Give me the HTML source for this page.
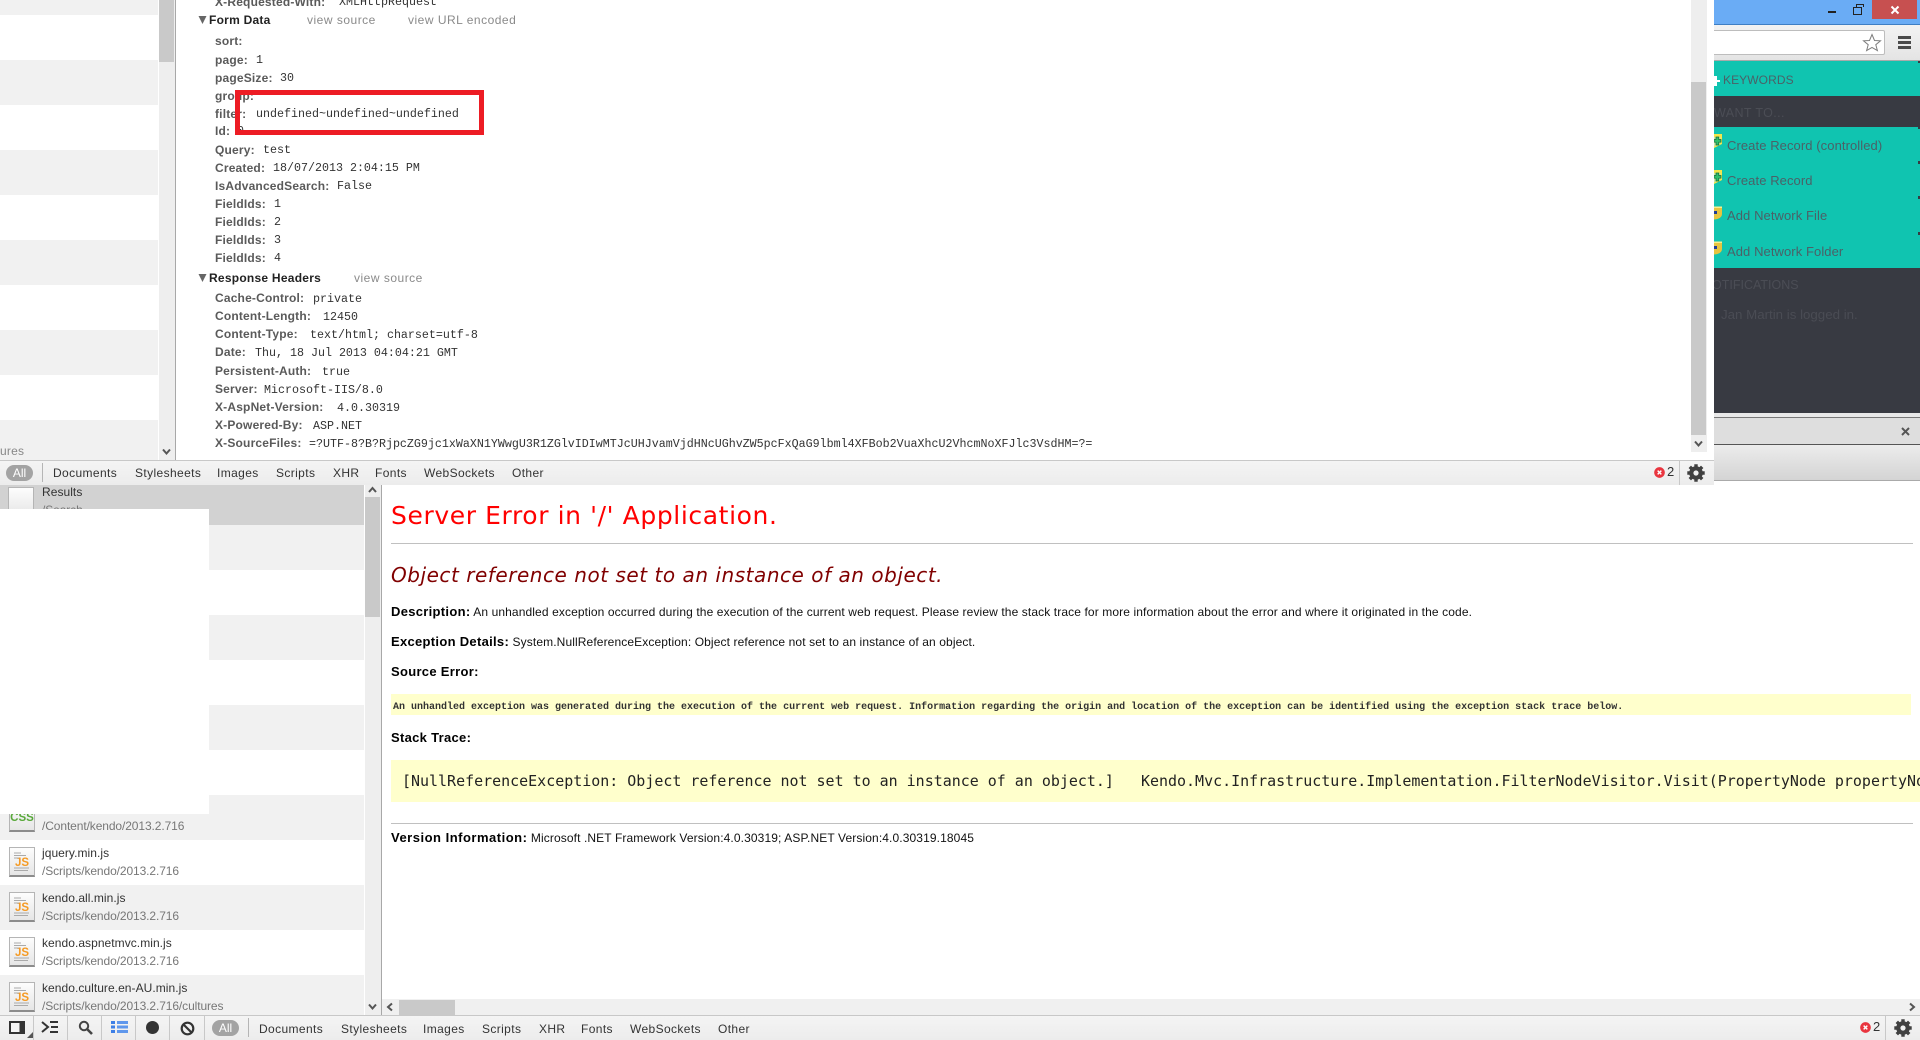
<!DOCTYPE html>
<html><head><meta charset="utf-8"><title>Server Error</title>
<style>
html,body{margin:0;padding:0;background:#fff;width:1920px;height:1040px;overflow:hidden}
body{position:relative;font-family:"Liberation Sans",sans-serif}
div.b{position:absolute}
.t{position:absolute;white-space:pre;line-height:16px;font-size:12px}
.l{font-weight:bold;color:#5a5a5a;left:215px;letter-spacing:.18px}
.v{font-family:"Liberation Mono",monospace;font-size:11.67px;color:#333}
.h{font-weight:bold;color:#222;left:209px;letter-spacing:.25px}
.g{color:#8a8a8a;letter-spacing:.5px}
.n{color:#333;left:42px;letter-spacing:.05px}
.p{color:#777;left:42px;letter-spacing:-.1px}
.tb{color:#333;letter-spacing:.38px;font-size:12px}
.pill{position:absolute;width:27px;height:16px;border-radius:8px;background:#a3a3a3;color:#fff;font-size:12px;line-height:16px;text-align:center;font-weight:normal}
.s{color:#4b6167;font-size:13px;letter-spacing:.08px;position:absolute;white-space:pre;line-height:18px}
.d{color:#4b4d55;font-size:12.5px;letter-spacing:.1px;position:absolute;white-space:pre;line-height:18px}
.e{font-size:12px;letter-spacing:.11px;color:#111;position:absolute;left:391px;white-space:pre;line-height:14px}
.e b{color:#000;font-size:13px;letter-spacing:.3px}
.i{position:absolute;width:24px;height:27px;border:1px solid #b5b5b5;border-bottom:2px solid #8c8c8c;background:linear-gradient(#fdfdfd,#e6e6e6);text-align:center;font-weight:bold;font-size:11.5px;line-height:31px;overflow:hidden}
.js{color:#f59a23}
.css{color:#58a83a}
.i svg{position:absolute;left:3px;top:3px}
</style></head>
<body>
<svg width="0" height="0" style="position:absolute"><defs>
<symbol id="gear" viewBox="0 0 18 18"><circle cx="9" cy="9" r="4.7" fill="none" stroke="#404040" stroke-width="4.2"/><path d="M9 0.3V4M9 14V17.7M0.3 9H4M14 9H17.7M2.8 2.8L5.5 5.5M12.5 12.5L15.2 15.2M15.2 2.8L12.5 5.5M5.5 12.5L2.8 15.2" stroke="#404040" stroke-width="3.4" fill="none"/></symbol>
<symbol id="err" viewBox="0 0 12 12"><circle cx="6" cy="6" r="5.8" fill="#e9353f"/><path d="M4 4L8 8M8 4L4 8" stroke="#fff" stroke-width="1.6"/></symbol>
<symbol id="dn" viewBox="0 0 10 8"><path d="M1.5 1.5L5 5.5L8.5 1.5" fill="none" stroke="#555" stroke-width="2"/></symbol>
<symbol id="up" viewBox="0 0 10 8"><path d="M1.5 6L5 2L8.5 6" fill="none" stroke="#555" stroke-width="2"/></symbol>
<symbol id="lf" viewBox="0 0 8 10"><path d="M6 1.5L2 5L6 8.5" fill="none" stroke="#555" stroke-width="2"/></symbol>
<symbol id="rt" viewBox="0 0 8 10"><path d="M2 1.5L6 5L2 8.5" fill="none" stroke="#555" stroke-width="2"/></symbol>
<symbol id="tri" viewBox="0 0 8 8"><path d="M0 0H8L4 8Z" fill="#666"/></symbol>
<symbol id="lines" viewBox="0 0 18 22"><path d="M1 2h7M1 4.5h12M1 7h5M1 17h7M7 17h9M1 19.5h14" stroke="#aaa" stroke-width="1" fill="none"/></symbol>
</defs></svg>

<!-- TOP LEFT LIST -->
<div class="b" style="left:0;top:0;width:158px;height:460px;background:#fff"></div>
<div class="b" style="left:0;top:0;width:158px;height:15px;background:#f1f1f1"></div>
<div class="b" style="left:0;top:60px;width:158px;height:45px;background:#f1f1f1"></div>
<div class="b" style="left:0;top:150px;width:158px;height:45px;background:#f1f1f1"></div>
<div class="b" style="left:0;top:240px;width:158px;height:45px;background:#f1f1f1"></div>
<div class="b" style="left:0;top:330px;width:158px;height:45px;background:#f1f1f1"></div>
<div class="b" style="left:0;top:420px;width:158px;height:40px;background:#f1f1f1"></div>
<span class="t" style="left:0;top:443px;color:#888;letter-spacing:.2px">ures</span>
<div class="b" style="left:159px;top:0;width:16px;height:460px;background:#eee"></div>
<div class="b" style="left:159px;top:0;width:15px;height:62px;background:#c9c9c9"></div>
<svg class="b" style="position:absolute;left:161px;top:448px" width="11" height="8"><use href="#dn"/></svg>
<div class="b" style="left:175px;top:0;width:1px;height:460px;background:#a8a8a8"></div>

<!-- TOP HEADERS -->
<span class="t l" style="top:-6px">X-Requested-With:</span><span class="t v" style="left:339px;top:-6px">XMLHttpRequest</span>
<svg style="position:absolute;left:198px;top:16px" width="9" height="8"><use href="#tri"/></svg>
<span class="t h" style="top:12px">Form Data</span>
<span class="t g" style="left:307px;top:12px">view source</span>
<span class="t g" style="left:408px;top:12px">view URL encoded</span>
<span class="t l" style="top:33px">sort:</span>
<span class="t l" style="top:52px">page:</span><span class="t v" style="left:256px;top:52px">1</span>
<span class="t l" style="top:70px">pageSize:</span><span class="t v" style="left:280px;top:70px">30</span>
<span class="t l" style="top:88px">group:</span>
<span class="t l" style="top:106px">filter:</span><span class="t v" style="left:256px;top:106px">undefined~undefined~undefined</span>
<span class="t l" style="top:123px">Id:</span><span class="t v" style="left:237px;top:123px">0</span>
<span class="t l" style="top:142px">Query:</span><span class="t v" style="left:263px;top:142px">test</span>
<span class="t l" style="top:160px">Created:</span><span class="t v" style="left:273px;top:160px">18/07/2013 2:04:15 PM</span>
<span class="t l" style="top:178px">IsAdvancedSearch:</span><span class="t v" style="left:337px;top:178px">False</span>
<span class="t l" style="top:196px">FieldIds:</span><span class="t v" style="left:274px;top:196px">1</span>
<span class="t l" style="top:214px">FieldIds:</span><span class="t v" style="left:274px;top:214px">2</span>
<span class="t l" style="top:232px">FieldIds:</span><span class="t v" style="left:274px;top:232px">3</span>
<span class="t l" style="top:250px">FieldIds:</span><span class="t v" style="left:274px;top:250px">4</span>
<svg style="position:absolute;left:198px;top:274px" width="9" height="8"><use href="#tri"/></svg>
<span class="t h" style="top:270px">Response Headers</span>
<span class="t g" style="left:354px;top:270px">view source</span>
<span class="t l" style="top:290px">Cache-Control:</span><span class="t v" style="left:313px;top:291px">private</span>
<span class="t l" style="top:308px">Content-Length:</span><span class="t v" style="left:323px;top:309px">12450</span>
<span class="t l" style="top:326px">Content-Type:</span><span class="t v" style="left:310px;top:327px">text/html; charset=utf-8</span>
<span class="t l" style="top:344px">Date:</span><span class="t v" style="left:255px;top:345px">Thu, 18 Jul 2013 04:04:21 GMT</span>
<span class="t l" style="top:363px">Persistent-Auth:</span><span class="t v" style="left:322px;top:364px">true</span>
<span class="t l" style="top:381px">Server:</span><span class="t v" style="left:264px;top:382px">Microsoft-IIS/8.0</span>
<span class="t l" style="top:399px">X-AspNet-Version:</span><span class="t v" style="left:337px;top:400px">4.0.30319</span>
<span class="t l" style="top:417px">X-Powered-By:</span><span class="t v" style="left:313px;top:418px">ASP.NET</span>
<span class="t l" style="top:435px">X-SourceFiles:</span><span class="t v" style="left:309px;top:436px">=?UTF-8?B?RjpcZG9jc1xWaXN1YWwgU3R1ZGlvIDIwMTJcUHJvamVjdHNcUGhvZW5pcFxQaG9lbml4XFBob2VuaXhcU2VhcmNoXFJlc3VsdHM=?=</span>
<div class="b" style="left:235px;top:90px;width:239px;height:35px;border:5px solid #ed1c24"></div>

<!-- TOP PANE RIGHT SCROLLBAR -->
<div class="b" style="left:1691px;top:0;width:16px;height:452px;background:#eee"></div>
<div class="b" style="left:1691px;top:82px;width:15px;height:353px;background:#c9c9c9"></div>
<svg style="position:absolute;left:1693px;top:440px" width="11" height="8"><use href="#dn"/></svg>

<!-- TOP TOOLBAR -->
<div class="b" style="left:0;top:460px;width:1714px;height:25px;background:linear-gradient(#f4f4f4,#ececec);border-top:1px solid #c8c8c8;box-sizing:border-box"></div>
<div class="pill" style="left:6px;top:465px">All</div>
<div class="b" style="left:42px;top:463px;width:1px;height:19px;background:#b5b5b5"></div>
<span class="t tb" style="left:53px;top:465px">Documents</span>
<span class="t tb" style="left:135px;top:465px">Stylesheets</span>
<span class="t tb" style="left:217px;top:465px">Images</span>
<span class="t tb" style="left:276px;top:465px">Scripts</span>
<span class="t tb" style="left:333px;top:465px">XHR</span>
<span class="t tb" style="left:375px;top:465px">Fonts</span>
<span class="t tb" style="left:424px;top:465px">WebSockets</span>
<span class="t tb" style="left:512px;top:465px">Other</span>
<svg style="position:absolute;left:1654px;top:467px" width="11" height="11"><use href="#err"/></svg>
<span class="t" style="left:1667px;top:464px;color:#333;font-size:13px">2</span>
<div class="b" style="left:1679px;top:460px;width:1px;height:25px;background:#c8c8c8"></div>
<svg style="position:absolute;left:1687px;top:464px" width="18" height="18"><use href="#gear"/></svg>

<!-- BROWSER WINDOW AT RIGHT -->
<div class="b" style="left:1714px;top:0;width:206px;height:24px;background:#6aacf5;border-bottom:1px solid #3f7fc4"></div>
<div class="b" style="left:1828px;top:11px;width:8px;height:2px;background:#222"></div>
<div class="b" style="left:1853px;top:7px;width:7px;height:6px;border:1px solid #222"></div>
<div class="b" style="left:1856px;top:4px;width:6px;height:2px;border:1px solid #222;border-bottom:0"></div>
<div class="b" style="left:1872px;top:0;width:45px;height:19px;background:#c75050"></div>
<svg style="position:absolute;left:1890px;top:5px" width="10" height="10"><path d="M1.5 1.5L8.5 8.5M8.5 1.5L1.5 8.5" stroke="#fff" stroke-width="2"/></svg>
<div class="b" style="left:1714px;top:25px;width:206px;height:35px;background:linear-gradient(#f3f3f3,#e4e4e4);border-bottom:1px solid #aaa;box-sizing:content-box"></div>
<div class="b" style="left:1700px;top:30px;width:183px;height:23px;background:#fff;border:1px solid #bdbdbd;border-radius:2px;clip-path:inset(-2px -2px -2px 14px)"></div>
<svg style="position:absolute;left:1862px;top:33px" width="20" height="19"><path d="M10 1.5L12.5 7.5L18.5 7.8L13.8 11.7L15.4 17.6L10 14.4L4.6 17.6L6.2 11.7L1.5 7.8L7.5 7.5Z" fill="#fff" stroke="#7d7d7d" stroke-width="1"/></svg>
<div class="b" style="left:1898px;top:36px;width:13px;height:3px;background:#4a4a4a"></div>
<div class="b" style="left:1898px;top:41px;width:13px;height:3px;background:#4a4a4a"></div>
<div class="b" style="left:1898px;top:46px;width:13px;height:3px;background:#4a4a4a"></div>

<div class="b" style="left:1714px;top:61px;width:206px;height:352px;background:#383a42"></div>
<div class="b" style="left:1714px;top:61px;width:206px;height:35px;background:#10c4b0"></div>
<div class="b" style="left:1714px;top:127px;width:206px;height:141px;background:#10c4b0"></div>
<div class="b" style="left:1714px;top:80px;width:6px;height:2px;background:#fff"></div>
<div class="b" style="left:1714px;top:76px;width:3px;height:10px;background:#fff"></div>
<span class="s" style="left:1723px;top:71px;font-size:12px">KEYWORDS</span>
<span class="d" style="left:1714px;top:104px;letter-spacing:.4px">WANT TO...</span>
<svg style="position:absolute;left:1714px;top:134px" width="8" height="14" viewBox="0 0 8 14"><path d="M0 0H8V10L0 14Z" fill="#f4e64a"/><path d="M0 3H6.5V9.5L0 12.5Z" fill="#c9e8a8"/><path d="M0 5.5H2V3H4.8V5.5H7V8.2H4.8V11H2V8.2H0Z" fill="#2fbf6a" stroke="#0c6a3a" stroke-width=".7"/></svg>
<span class="s" style="left:1727px;top:137px">Create Record (controlled)</span>
<svg style="position:absolute;left:1714px;top:170px" width="8" height="14" viewBox="0 0 8 14"><path d="M0 0H8V10L0 14Z" fill="#f4e64a"/><path d="M0 3H6.5V9.5L0 12.5Z" fill="#c9e8a8"/><path d="M0 5.5H2V3H4.8V5.5H7V8.2H4.8V11H2V8.2H0Z" fill="#2fbf6a" stroke="#0c6a3a" stroke-width=".7"/></svg>
<span class="s" style="left:1727px;top:172px">Create Record</span>
<svg style="position:absolute;left:1714px;top:206px" width="8" height="14" viewBox="0 0 8 14"><path d="M0 0.5H8V8C8 11.5 4 13.5 0 13.5Z" fill="#e6c43f"/><path d="M0 0.5H8V2H0Z" fill="#f6ee90"/><path d="M0 5H3V8H0Z" fill="#1f3d97"/></svg>
<span class="s" style="left:1727px;top:207px">Add Network File</span>
<svg style="position:absolute;left:1714px;top:241px" width="8" height="14" viewBox="0 0 8 14"><path d="M0 0.5H8V8C8 11.5 4 13.5 0 13.5Z" fill="#e6c43f"/><path d="M0 0.5H8V2H0Z" fill="#f6ee90"/><path d="M0 5H3V8H0Z" fill="#1f3d97"/></svg>
<span class="s" style="left:1727px;top:243px">Add Network Folder</span>
<div class="b" style="left:1714px;top:276px;width:206px;height:20px;overflow:hidden"><span class="d" style="left:-11px;top:0;color:#4b4d55;letter-spacing:0">NOTIFICATIONS</span></div>
<span class="d" style="left:1721px;top:306px;color:#4a4c54;font-size:13.3px;letter-spacing:0">Jan Martin is logged in.</span>
<div class="b" style="left:1918px;top:61px;width:2px;height:2px;background:#383a42"></div>
<div class="b" style="left:1918px;top:126px;width:2px;height:3px;background:#383a42"></div>
<div class="b" style="left:1918px;top:161px;width:2px;height:3px;background:#383a42"></div>
<div class="b" style="left:1918px;top:196px;width:2px;height:3px;background:#383a42"></div>
<div class="b" style="left:1918px;top:232px;width:2px;height:3px;background:#383a42"></div>

<div class="b" style="left:1714px;top:413px;width:206px;height:4px;background:#e8e8e8"></div>
<div class="b" style="left:1714px;top:417px;width:206px;height:28px;background:#dedede;border-top:1px solid #777;border-bottom:1px solid #555;box-sizing:border-box"></div>
<svg style="position:absolute;left:1901px;top:427px" width="9" height="9"><path d="M1 1L8 8M8 1L1 8" stroke="#555" stroke-width="2"/></svg>
<div class="b" style="left:1714px;top:445px;width:206px;height:36px;background:linear-gradient(#ececec,#d4d4d4);border-bottom:1px solid #aaa;box-sizing:border-box"></div>

<!-- BOTTOM LEFT LIST -->
<div class="b" style="left:0;top:485px;width:364px;height:40px;background:#d2d2d2"></div>
<div class="b" style="left:0;top:525px;width:364px;height:45px;background:#f1f1f1"></div>
<div class="b" style="left:0;top:615px;width:364px;height:45px;background:#f1f1f1"></div>
<div class="b" style="left:0;top:705px;width:364px;height:45px;background:#f1f1f1"></div>
<div class="b" style="left:0;top:795px;width:364px;height:45px;background:#f1f1f1"></div>
<div class="b" style="left:0;top:885px;width:364px;height:45px;background:#f1f1f1"></div>
<div class="b" style="left:0;top:975px;width:364px;height:40px;background:#f1f1f1"></div>
<div class="i" style="left:8px;top:487px"></div>
<span class="t n" style="top:484px">Results</span>
<span class="t p" style="top:502px">/Search</span>
<div class="i" style="left:9px;top:802px"><span class="css">CSS</span></div>
<span class="t p" style="top:818px">/Content/kendo/2013.2.716</span>
<div class="b" style="left:0;top:509px;width:209px;height:305px;background:#fff"></div>

<div class="i js" style="left:9px;top:847px"><svg width="18" height="22"><use href="#lines"/></svg>JS</div>
<span class="t n" style="top:845px">jquery.min.js</span><span class="t p" style="top:863px">/Scripts/kendo/2013.2.716</span>
<div class="i js" style="left:9px;top:892px"><svg width="18" height="22"><use href="#lines"/></svg>JS</div>
<span class="t n" style="top:890px">kendo.all.min.js</span><span class="t p" style="top:908px">/Scripts/kendo/2013.2.716</span>
<div class="i js" style="left:9px;top:937px"><svg width="18" height="22"><use href="#lines"/></svg>JS</div>
<span class="t n" style="top:935px">kendo.aspnetmvc.min.js</span><span class="t p" style="top:953px">/Scripts/kendo/2013.2.716</span>
<div class="i js" style="left:9px;top:982px"><svg width="18" height="22"><use href="#lines"/></svg>JS</div>
<span class="t n" style="top:980px">kendo.culture.en-AU.min.js</span><span class="t p" style="top:998px">/Scripts/kendo/2013.2.716/cultures</span>

<div class="b" style="left:365px;top:485px;width:16px;height:530px;background:#eee"></div>
<div class="b" style="left:365px;top:497px;width:15px;height:120px;background:#c9c9c9"></div>
<svg style="position:absolute;left:367px;top:486px" width="11" height="8"><use href="#up"/></svg>
<svg style="position:absolute;left:367px;top:1003px" width="11" height="8"><use href="#dn"/></svg>
<div class="b" style="left:381px;top:485px;width:1px;height:530px;background:#a8a8a8"></div>

<!-- ERROR PAGE -->
<span style="position:absolute;left:391px;top:500px;font-family:'DejaVu Sans',sans-serif;font-size:25px;letter-spacing:.6px;color:#f00;line-height:32px;white-space:pre">Server Error in '/' Application.</span>
<div class="b" style="left:391px;top:543px;width:1522px;height:1px;background:#c0c0c0"></div>
<span style="position:absolute;left:391px;top:562px;font-family:'DejaVu Sans',sans-serif;font-style:italic;font-size:20px;letter-spacing:.53px;color:#800000;line-height:26px;white-space:pre">Object reference not set to an instance of an object.</span>
<span class="e" style="top:605px"><b>Description:</b> An unhandled exception occurred during the execution of the current web request. Please review the stack trace for more information about the error and where it originated in the code.</span>
<span class="e" style="top:635px"><b>Exception Details:</b> System.NullReferenceException: Object reference not set to an instance of an object.</span>
<span class="e" style="top:665px"><b>Source Error:</b></span>
<div class="b" style="left:391px;top:694px;width:1520px;height:21px;background:#ffffcc"></div>
<span style="position:absolute;left:393px;top:701px;font-family:'Liberation Mono',monospace;font-size:10px;line-height:14px;color:#333;font-weight:bold;white-space:pre">An unhandled exception was generated during the execution of the current web request. Information regarding the origin and location of the exception can be identified using the exception stack trace below.</span>
<span class="e" style="top:731px"><b>Stack Trace:</b></span>
<div class="b" style="left:391px;top:760px;width:1529px;height:42px;background:#ffffcc;overflow:hidden"><span style="position:absolute;left:11px;top:12px;font-family:'DejaVu Sans Mono',monospace;font-size:14.97px;line-height:18px;color:#222;white-space:pre">[NullReferenceException: Object reference not set to an instance of an object.]   Kendo.Mvc.Infrastructure.Implementation.FilterNodeVisitor.Visit(PropertyNode propertyNode)</span></div>
<div class="b" style="left:391px;top:823px;width:1522px;height:1px;background:#c0c0c0"></div>
<span class="e" style="top:831px"><b style="letter-spacing:.5px">Version Information:</b> Microsoft .NET Framework Version:4.0.30319; ASP.NET Version:4.0.30319.18045</span>

<!-- H SCROLL -->
<div class="b" style="left:382px;top:999px;width:1538px;height:16px;background:#f0f0f0"></div>
<div class="b" style="left:399px;top:1000px;width:56px;height:15px;background:#c9c9c9"></div>
<svg style="position:absolute;left:386px;top:1002px" width="8" height="10"><use href="#lf"/></svg>
<svg style="position:absolute;left:1908px;top:1002px" width="8" height="10"><use href="#rt"/></svg>

<!-- BOTTOM TOOLBAR -->
<div class="b" style="left:0;top:1015px;width:1920px;height:25px;background:linear-gradient(#f4f4f4,#ececec);border-top:1px solid #c8c8c8;box-sizing:border-box"></div>
<div class="b" style="left:9px;top:1021px;width:12px;height:9px;border:2px solid #333;background:linear-gradient(90deg,#f5f5f5 72%,#333 72%)"></div>
<svg style="position:absolute;left:27px;top:1032px" width="6" height="6"><path d="M6 0V6H0Z" fill="#555"/></svg>
<div class="b" style="left:33px;top:1016px;width:1px;height:24px;background:#c8c8c8"></div>
<svg style="position:absolute;left:41px;top:1020px" width="18" height="14"><path d="M1 2L7 7L1 12" fill="none" stroke="#333" stroke-width="2"/><path d="M9 2H17M10 7H17M9 12H17" stroke="#333" stroke-width="2"/></svg>
<div class="b" style="left:67px;top:1016px;width:1px;height:24px;background:#c8c8c8"></div>
<svg style="position:absolute;left:78px;top:1020px" width="16" height="16"><circle cx="6" cy="6" r="4.2" fill="none" stroke="#444" stroke-width="2"/><path d="M9 9L14 14" stroke="#444" stroke-width="2.6"/></svg>
<div class="b" style="left:101px;top:1016px;width:1px;height:24px;background:#c8c8c8"></div>
<svg style="position:absolute;left:111px;top:1020px" width="17" height="14"><path d="M0 1h4v3H0zM0 5.5h4v3H0zM0 10h4v3H0z" fill="#3d7fe6"/><path d="M6 1h11v3H6zM6 5.5h11v3H6zM6 10h11v3H6z" fill="#5f97ec"/></svg>
<div class="b" style="left:135px;top:1016px;width:1px;height:24px;background:#c8c8c8"></div>
<div class="b" style="left:146px;top:1021px;width:13px;height:13px;border-radius:50%;background:#333"></div>
<div class="b" style="left:169px;top:1016px;width:1px;height:24px;background:#c8c8c8"></div>
<svg style="position:absolute;left:180px;top:1021px" width="15" height="15"><circle cx="7.5" cy="7.5" r="5.8" fill="none" stroke="#333" stroke-width="2.2"/><path d="M3.5 3.5L11.5 11.5" stroke="#333" stroke-width="2.2"/></svg>
<div class="b" style="left:204px;top:1016px;width:1px;height:24px;background:#c8c8c8"></div>
<div class="pill" style="left:212px;top:1020px">All</div>
<div class="b" style="left:248px;top:1018px;width:1px;height:19px;background:#b5b5b5"></div>
<span class="t tb" style="left:259px;top:1021px">Documents</span>
<span class="t tb" style="left:341px;top:1021px">Stylesheets</span>
<span class="t tb" style="left:423px;top:1021px">Images</span>
<span class="t tb" style="left:482px;top:1021px">Scripts</span>
<span class="t tb" style="left:539px;top:1021px">XHR</span>
<span class="t tb" style="left:581px;top:1021px">Fonts</span>
<span class="t tb" style="left:630px;top:1021px">WebSockets</span>
<span class="t tb" style="left:718px;top:1021px">Other</span>
<svg style="position:absolute;left:1860px;top:1022px" width="11" height="11"><use href="#err"/></svg>
<span class="t" style="left:1873px;top:1019px;color:#333;font-size:13px">2</span>
<div class="b" style="left:1885px;top:1016px;width:1px;height:24px;background:#c8c8c8"></div>
<svg style="position:absolute;left:1894px;top:1019px" width="18" height="18"><use href="#gear"/></svg>
</body></html>
